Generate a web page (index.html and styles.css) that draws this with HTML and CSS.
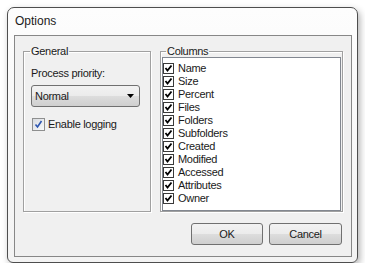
FILE: index.html
```html
<!DOCTYPE html>
<html lang="en">
<head>
    <meta charset="UTF-8">
    <meta name="viewport" content="width=device-width, initial-scale=1.0">
    <title>Options</title>
    <link rel="stylesheet" href="styles.css">
</head>
<body>

<div class="dialog">
    <div class="title">Options</div>
    <div class="client">
        <div class="groups">
            <fieldset class="group general">
                <legend>General</legend>
                <div class="label">Process priority:</div>
                <div class="combo">
                    <span>Normal</span>
                    <svg class="arrow" width="7" height="4" viewBox="0 0 7 4"><path d="M0 0H7L3.5 4Z" fill="#000"/></svg>
                </div>
                <div class="check-row">
                    <span class="win-check">
                        <svg width="9" height="9" viewBox="0 0 9 9"><path d="M1.5 4.5L3.5 7L7.5 1" fill="none" stroke="#2c55b0" stroke-width="1.6"/></svg>
                    </span>
                    <span>Enable logging</span>
                </div>
            </fieldset>
            <fieldset class="group columns">
                <legend>Columns</legend>
                <div class="listbox">
                    <div class="item"><span class="box"><svg width="9" height="9" viewBox="0 0 9 9"><path d="M1.5 4L3.5 6.5L7.5 1.5" fill="none" stroke="#000" stroke-width="1.8"/></svg></span>Name</div>
                    <div class="item"><span class="box"><svg width="9" height="9" viewBox="0 0 9 9"><path d="M1.5 4L3.5 6.5L7.5 1.5" fill="none" stroke="#000" stroke-width="1.8"/></svg></span>Size</div>
                    <div class="item"><span class="box"><svg width="9" height="9" viewBox="0 0 9 9"><path d="M1.5 4L3.5 6.5L7.5 1.5" fill="none" stroke="#000" stroke-width="1.8"/></svg></span>Percent</div>
                    <div class="item"><span class="box"><svg width="9" height="9" viewBox="0 0 9 9"><path d="M1.5 4L3.5 6.5L7.5 1.5" fill="none" stroke="#000" stroke-width="1.8"/></svg></span>Files</div>
                    <div class="item"><span class="box"><svg width="9" height="9" viewBox="0 0 9 9"><path d="M1.5 4L3.5 6.5L7.5 1.5" fill="none" stroke="#000" stroke-width="1.8"/></svg></span>Folders</div>
                    <div class="item"><span class="box"><svg width="9" height="9" viewBox="0 0 9 9"><path d="M1.5 4L3.5 6.5L7.5 1.5" fill="none" stroke="#000" stroke-width="1.8"/></svg></span>Subfolders</div>
                    <div class="item"><span class="box"><svg width="9" height="9" viewBox="0 0 9 9"><path d="M1.5 4L3.5 6.5L7.5 1.5" fill="none" stroke="#000" stroke-width="1.8"/></svg></span>Created</div>
                    <div class="item"><span class="box"><svg width="9" height="9" viewBox="0 0 9 9"><path d="M1.5 4L3.5 6.5L7.5 1.5" fill="none" stroke="#000" stroke-width="1.8"/></svg></span>Modified</div>
                    <div class="item"><span class="box"><svg width="9" height="9" viewBox="0 0 9 9"><path d="M1.5 4L3.5 6.5L7.5 1.5" fill="none" stroke="#000" stroke-width="1.8"/></svg></span>Accessed</div>
                    <div class="item"><span class="box"><svg width="9" height="9" viewBox="0 0 9 9"><path d="M1.5 4L3.5 6.5L7.5 1.5" fill="none" stroke="#000" stroke-width="1.8"/></svg></span>Attributes</div>
                    <div class="item"><span class="box"><svg width="9" height="9" viewBox="0 0 9 9"><path d="M1.5 4L3.5 6.5L7.5 1.5" fill="none" stroke="#000" stroke-width="1.8"/></svg></span>Owner</div>
                </div>
            </fieldset>
        </div>
        <div class="buttons">
            <button class="btn ok">OK</button>
            <button class="btn cancel">Cancel</button>
        </div>
    </div>
</div>

</body>
</html>
```

FILE: styles.css
```css
body {
    margin: 0;
    background: #fff;
    font-family: "Liberation Sans", Arial, sans-serif;
    font-size: 11px;
    letter-spacing: -0.3px;
    color: #1a1a1a;
}
.dialog {
    box-sizing: border-box;
    margin: 7px 0 0 7px;
    width: 351px;
    height: 256px;
    padding: 0 5px 5px 6px;
    border: 1px solid #4e4e4e;
    border-radius: 7px 7px 6px 6px;
    background: linear-gradient(#fdfdfd, #f3f3f3);
    box-shadow: 2px 3px 7px rgba(0, 0, 0, 0.3);
    display: flex;
    flex-direction: column;
}
.title {
    height: 27px;
    line-height: 27px;
    padding-left: 1px;
    font-size: 12px;
    letter-spacing: 0;
    color: #1b1b1b;
}
.client {
    flex: 1;
    border: 1px solid #878787;
    background: #f0f0f0;
    padding: 9px 8px 11px 8px;
    display: flex;
    flex-direction: column;
}
.groups {
    display: flex;
    gap: 9px;
    height: 167px;
}
.group {
    box-sizing: border-box;
    margin: 0;
    min-width: 0;
    height: 167px;
    border: 1px solid #a0a0a0;
    box-shadow: inset 1px 1px 0 #fff, 1px 1px 0 #fff;
}
.group legend {
    padding: 0 1px;
    line-height: 12px;
}
.general {
    width: 128px;
    padding: 10px 9px 0 7px;
}
.general legend {
    margin-left: -1px;
}
.columns {
    width: 183px;
    padding: 0 1px;
}
.columns legend {
    margin-left: 4px;
}
.label {
    line-height: 13px;
}
.combo {
    box-sizing: border-box;
    margin-top: 5px;
    width: 109px;
    height: 22px;
    padding: 0 5px 0 3px;
    border: 1px solid #707070;
    border-radius: 3px;
    background: linear-gradient(#f2f2f2 0, #ebebeb 50%, #dddddd 50%, #cfcfcf 100%);
    display: flex;
    align-items: center;
    justify-content: space-between;
}
.check-row {
    margin-top: 11px;
    height: 13px;
    line-height: 13px;
    display: flex;
    align-items: center;
    gap: 3px;
}
.win-check {
    box-sizing: border-box;
    width: 13px;
    height: 13px;
    margin-left: 1px;
    border: 1px solid #8e8f8f;
    background: linear-gradient(135deg, #d8dbe0, #f9f9fa);
    display: flex;
    align-items: center;
    justify-content: center;
}
.listbox {
    box-sizing: border-box;
    height: 154px;
    border: 1px solid #828790;
    background: #fff;
    padding-top: 4px;
}
.item {
    height: 13px;
    line-height: 13px;
    display: flex;
    align-items: center;
}
.box {
    box-sizing: border-box;
    width: 11px;
    height: 11px;
    margin-right: 4px;
    border: 1px solid #3a3a3a;
    background: #fff;
    display: flex;
    align-items: center;
    justify-content: center;
}
.buttons {
    margin-top: 11px;
    padding-right: 1px;
    display: flex;
    justify-content: flex-end;
    gap: 6px;
}
.btn {
    box-sizing: border-box;
    height: 22px;
    border: 1px solid #707070;
    border-radius: 3px;
    background: linear-gradient(#f2f2f2 0, #ebebeb 50%, #dddddd 50%, #cfcfcf 100%);
    font-family: "Liberation Sans", Arial, sans-serif;
    font-size: 11px;
    letter-spacing: -0.3px;
    color: #1a1a1a;
    padding: 0;
}
.ok {
    width: 72px;
}
.cancel {
    width: 73px;
}
```
